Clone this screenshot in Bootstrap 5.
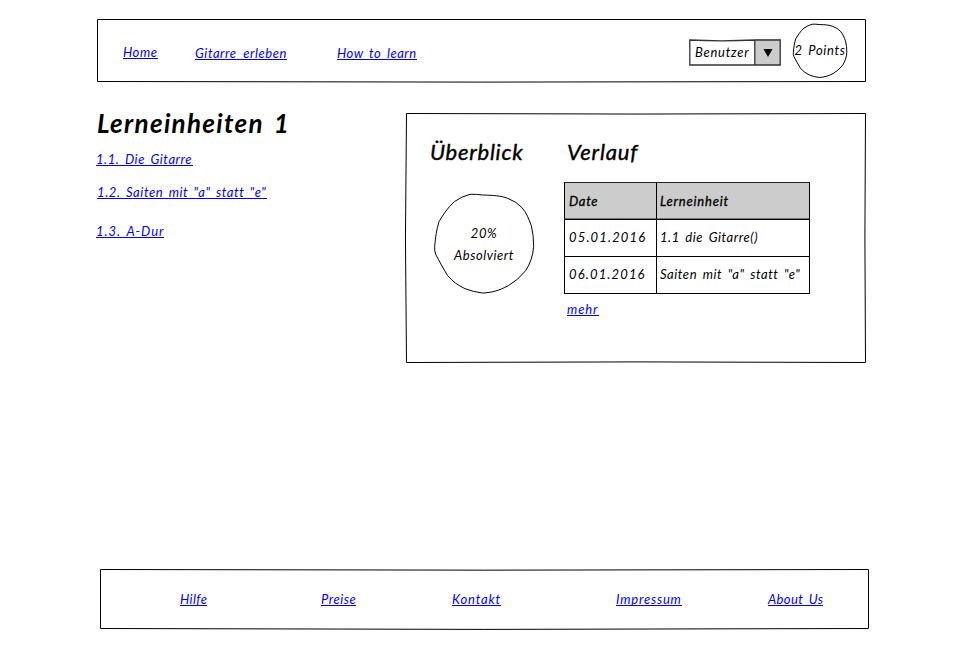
<!DOCTYPE html>
<html lang="de">
<head>
<meta charset="utf-8">
<meta name="viewport" content="width=device-width, initial-scale=1">
<title>Lerneinheiten</title>
<link rel="stylesheet" href="https://cdn.jsdelivr.net/npm/bootstrap@5.3.0/dist/css/bootstrap.min.css">
<style>
body{font:italic 13px/15px Lato,sans-serif;letter-spacing:.55px;word-spacing:2px;color:#000;background:#fff}
.page{width:772px;margin-left:97px;padding-top:19px;min-height:650px}
.sketch{inset:0;width:100%;height:100%;overflow:visible;fill:none;stroke:#000;stroke-width:1;pointer-events:none}
.sketch path{vector-effect:non-scaling-stroke}
/* hyperlinks: the rule sits just under the baseline */
.hl{display:block;flex:none;height:15px;width:var(--w);line-height:17px;white-space:nowrap;color:#00f;text-decoration:none;border-bottom:1px solid #00f}
.topbar{width:769px;height:63px}
.toplinks{padding:25px 0 0 26px}
.toplinks .t1{margin:1px 0 0 37px;word-spacing:3px}
.toplinks .t2{margin:1px 0 0 50px}
.picker{width:92px;height:26px;margin-top:20px;padding:0;font:inherit;letter-spacing:.75px;color:#000;border:0;background:linear-gradient(to right,#fff 66px,#ccc 66px)}
.picker .lbl{width:66px;padding-left:6px;text-align:left}
.picker .arr{width:26px}
.arr svg{display:block;margin:1px auto 0}
.points{width:54px;height:54px;margin:5px 19px 0 12px;letter-spacing:.65px}
.points span{padding-bottom:1px}
.main{height:462px;padding-top:25px;box-sizing:content-box}
.units{width:309px}
.units .hl{margin-left:-1px}
h1{font-size:26px;line-height:33px;font-weight:700;letter-spacing:1.3px;word-spacing:3px;margin:0 0 11px}
h2{font-size:22px;line-height:28px;font-weight:400;letter-spacing:.85px;margin:0;-webkit-text-stroke:.4px #000}
.units .u2{margin:18px 0 0 0;letter-spacing:.6px;word-spacing:1.7px}
.u3{margin-top:24px;letter-spacing:.95px}
.panel{width:460px;height:250px;margin-top:6px;padding-top:25px}
.overview{width:158px}
.overview h2{padding-left:24px;letter-spacing:.75px}
.progress-ring{width:100px;height:100px;margin:28px 0 0 28px;line-height:22px}
.history h2{padding-left:3px}
.log{width:246px;margin-top:16px;table-layout:fixed;border-collapse:separate;border-spacing:0;border-top:1px solid #222;border-left:1px solid #000}
.log th,.log td{height:37px;padding:0 0 0 3px;vertical-align:middle;white-space:nowrap;border-right:1px solid #000;border-bottom:1px solid #000}
.log td{padding-bottom:1px}
.log th{font-weight:400;-webkit-text-stroke:.3px #000;background:#ccc;box-shadow:inset 0 -1px #777;letter-spacing:.8px}
.log .day{width:92px;padding-left:4px;letter-spacing:1.15px}
.log th.day{letter-spacing:.7px}
.more{margin:7px 0 0 3px;letter-spacing:.9px}
.foot{width:769px;height:60px;margin-left:3px;padding-top:22px}
.foot .sketch{height:64px}
.f1{margin-left:80px;letter-spacing:.4px}.f2{margin-left:114px}.f3{margin-left:96px;letter-spacing:.85px}.f4{margin-left:115px;letter-spacing:.8px}.f5{margin-left:86px;letter-spacing:.4px}
.w27{--w:27px}.w32{--w:32px}.w35{--w:35px}.w49{--w:49px}.w55{--w:55px}.w66{--w:66px}.w68{--w:68px}.w80{--w:80px}.w92{--w:92px}.w97{--w:97px}.w170{--w:170px}
</style>
</head>
<body>
<div class="page">
  <header class="topbar position-relative d-flex justify-content-between">
    <svg class="sketch position-absolute" viewBox="0 0 769 63"><path d="M.5 .5H768.5V62.5Q384 63.7 .5 62.5Z"/></svg>
    <nav class="toplinks d-flex align-items-start">
      <a class="hl w35" href="#">Home</a>
      <a class="hl w92 t1" href="#">Gitarre erleben</a>
      <a class="hl w80 t2" href="#">How to learn</a>
    </nav>
    <div class="d-flex align-items-start">
      <button class="picker position-relative d-flex align-items-center" type="button">
        <svg class="sketch position-absolute" viewBox="0 0 92 26"><path stroke="#333" stroke-width="1.3" d="M.8 1Q32 2.6 66 1H91.2V26H.8ZM65.8 1V26"/></svg>
        <span class="lbl">Benutzer</span>
        <span class="arr"><svg width="10" height="8" viewBox="0 0 10 8"><path d="M.5 0H9.5L5 8Z"/></svg></span>
      </button>
      <div class="points position-relative d-flex align-items-center justify-content-center text-nowrap">
        <svg class="sketch position-absolute" viewBox="27 27 300 300" preserveAspectRatio="none"><path d="M135 28Q155 27 172 30C205 31 228 32 248 40Q275 50 290 67C305 83 312 104 319 122Q326 150 326 185C324 212 316 235 302 257Q280 285 250 302C222 317 200 323 172 324Q145 321 120 311C98 300 83 290 68 272C54 250 44 230 32 208Q28 198 29 185C31 158 35 132 42 110C56 87 68 68 88 50Q110 34 135 28Z"/></svg>
        <span>2 Points</span>
      </div>
    </div>
  </header>

  <main class="main d-flex align-items-start">
    <section class="units">
      <h1 class="text-nowrap">Lerneinheiten 1</h1>
      <div>
        <a class="hl w97" href="#">1.1. Die Gitarre</a>
        <a class="hl w170 u2" href="#">1.2. Saiten mit "a" statt "e"</a>
        <a class="hl w68 u3" href="#">1.3. A-Dur</a>
      </div>
    </section>
    <section class="panel position-relative d-flex align-items-start">
      <svg class="sketch position-absolute" viewBox="0 0 460 250"><path d="M.5 .5Q230 1.6 459.5 .5Q458.3 125 459.5 249.5Q230 248.3 .5 249.5Q-1.6 125 .5 .5Z"/></svg>
      <div class="overview">
        <h2>Überblick</h2>
        <div class="progress-ring position-relative d-flex flex-column align-items-center justify-content-center">
          <svg class="sketch position-absolute" viewBox="27 27 300 300"><path d="M135 28Q155 27 172 30C205 31 228 32 248 40Q275 50 290 67C305 83 312 104 319 122Q326 150 326 185C324 212 316 235 302 257Q280 285 250 302C222 317 200 323 172 324Q145 321 120 311C98 300 83 290 68 272C54 250 44 230 32 208Q28 198 29 185C31 158 35 132 42 110C56 87 68 68 88 50Q110 34 135 28Z"/></svg>
          <span>20%</span>
          <span>Absolviert</span>
        </div>
      </div>
      <div class="history">
        <h2>Verlauf</h2>
        <table class="log">
          <thead><tr><th class="day">Date</th><th>Lerneinheit</th></tr></thead>
          <tbody>
            <tr><td class="day">05.01.2016</td><td>1.1 die Gitarre()</td></tr>
            <tr><td class="day">06.01.2016</td><td>Saiten mit "a" statt "e"</td></tr>
          </tbody>
        </table>
        <a class="hl w32 more" href="#">mehr</a>
      </div>
    </section>
  </main>

  <footer class="foot position-relative d-flex align-items-start">
    <svg class="sketch position-absolute" viewBox="0 0 769 64"><path d="M.5 .5Q384 1.8 768.5 .5V59.5Q384 61.3 .5 59.5Z"/></svg>
    <a class="hl w27 f1" href="#">Hilfe</a>
    <a class="hl w35 f2" href="#">Preise</a>
    <a class="hl w49 f3" href="#">Kontakt</a>
    <a class="hl w66 f4" href="#">Impressum</a>
    <a class="hl w55 f5" href="#">About Us</a>
  </footer>
</div>
<script src="https://cdn.jsdelivr.net/npm/bootstrap@5.3.0/dist/js/bootstrap.bundle.min.js"></script>
</body>
</html>
